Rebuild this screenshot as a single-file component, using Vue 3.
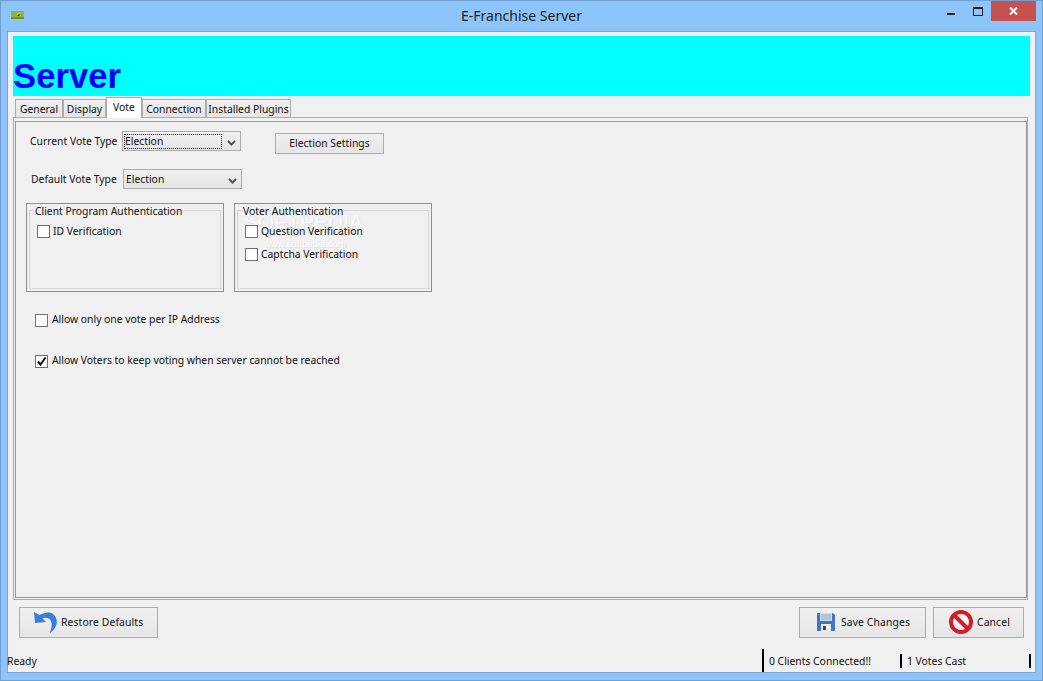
<script setup>
const tabs = [
  { label: 'General', width: 48 },
  { label: 'Display', width: 43 },
  { label: 'Vote', width: 36, active: true },
  { label: 'Connection', width: 64 },
  { label: 'Installed Plugins', width: 85 }
]
</script>

<template>
  <div class="window">
    <header class="titlebar">
      <svg class="app-icon" width="13" height="8" viewBox="0 0 13 8">
        <rect width="13" height="8" fill="#8fb83a" />
        <rect y="6" width="13" height="2" fill="#6f8f3a" />
        <path d="M5 4l3-3 1 1-2 3z" fill="#e4d020" />
        <path d="M6 5l2-2 1 1-1 1z" fill="#2c3a10" />
      </svg>
      <h1 class="title">E-Franchise Server</h1>
      <div class="controls">
        <span class="minimize"></span>
        <span class="maximize"></span>
        <span class="close">
          <svg width="9" height="8" viewBox="0 0 9 8"><path d="M1 0.5l7 7M8 0.5l-7 7" stroke="#fff" stroke-width="2" /></svg>
        </span>
      </div>
    </header>

    <main class="client">
      <div class="banner"><span class="banner-text">Server</span></div>

      <nav class="tabs">
        <div
          v-for="tab in tabs"
          :key="tab.label"
          class="tab"
          :class="{ active: tab.active }"
          :style="{ width: tab.width + 'px' }"
        >{{ tab.label }}</div>
      </nav>

      <section class="pane">
        <div class="pane-inner">
          <div class="row row-one">
            <span class="label">Current Vote Type</span>
            <div class="combo">
              <span class="combo-value focused">Election</span>
              <svg class="chev" width="9" height="6" viewBox="0 0 9 6"><path d="M1 1l3.500 3.500L8 1" fill="none" stroke="#555" stroke-width="2" /></svg>
            </div>
            <button class="btn settings">Election Settings</button>
          </div>

          <div class="row row-two">
            <span class="label">Default Vote Type</span>
            <div class="combo">
              <span class="combo-value">Election</span>
              <svg class="chev" width="9" height="6" viewBox="0 0 9 6"><path d="M1 1l3.500 3.500L8 1" fill="none" stroke="#555" stroke-width="2" /></svg>
            </div>
          </div>

          <div class="groups">
            <fieldset class="group">
              <div class="group-inner">
                <span class="legend">Client Program Authentication</span>
                <label class="check"><span class="box"></span>ID Verification</label>
              </div>
            </fieldset>
            <fieldset class="group">
              <div class="group-inner">
                <span class="wm wm-main">SOFTPEDIA</span>
                <span class="wm wm-url">www.softpedia.com</span>
                <span class="legend">Voter Authentication</span>
                <label class="check"><span class="box"></span>Question Verification</label>
                <label class="check second"><span class="box"></span>Captcha Verification</label>
              </div>
            </fieldset>
          </div>

          <label class="check solo first"><span class="box"></span>Allow only one vote per IP Address</label>
          <label class="check solo next">
            <span class="box">
              <svg width="11" height="11" viewBox="0 0 11 11"><path d="M2 5.500l2.500 3L9.500 1.500" fill="none" stroke="#111" stroke-width="2" /></svg>
            </span>Allow Voters to keep voting when server cannot be reached
          </label>
        </div>
      </section>

      <div class="actions">
        <button class="btn action restore">
          <svg width="24" height="24" viewBox="0 0 24 24">
            <path d="M0 2l1 11 11-1-3.500-3.500c3-1.500 7-.5 8.500 2.500 1.500 3.500.5 8-1.500 12.500 5-3.500 8.500-9 7-14C21 2.500 14 0 5.500 5z" fill="#3b7ddd" />
          </svg>
          <span>Restore Defaults</span>
        </button>
        <div class="spacer"></div>
        <button class="btn action save">
          <svg width="18" height="18" viewBox="0 0 18 18">
            <path d="M0 0h16l2 2v16H0z" fill="#3f78bd" />
            <rect x="3" y="0" width="12" height="8" fill="#c9d7e8" />
            <path d="M4 2h10M4 4h10M4 6h10" stroke="#9db4d0" stroke-width="1" />
            <rect x="4" y="11" width="10" height="7" fill="#f0f0f0" />
            <rect x="6" y="13" width="3" height="4" fill="#2a4c80" />
          </svg>
          <span>Save Changes</span>
        </button>
        <button class="btn action cancel">
          <svg width="24" height="24" viewBox="0 0 24 24">
            <circle cx="12" cy="12" r="10" fill="#f4f4f4" stroke="#d01f2a" stroke-width="4" />
            <path d="M5.500 5.500l13 13" stroke="#d01f2a" stroke-width="4" />
          </svg>
          <span>Cancel</span>
        </button>
      </div>

      <footer class="status">
        <span class="ready">Ready</span>
        <span class="cell clients">0 Clients Connected!!</span>
        <span class="cell votes">1 Votes Cast</span>
      </footer>
    </main>
  </div>
</template>

<style>
html, body { margin: 0; background: #8dc5fa; }
</style>

<style scoped>
.window {
  width: 1043px;
  height: 681px;
  box-sizing: border-box;
  border: 1px solid #6f9fd0;
  background: #8dc5fa;
  padding: 0 6px 7px;
  display: flex;
  flex-direction: column;
  font-family: "Noto Sans", "Open Sans", sans-serif;
  font-size: 10.35px;
  color: #111;
  overflow: hidden;
}
.titlebar {
  height: 30px;
  flex: none;
  position: relative;
  display: flex;
  align-items: flex-start;
  justify-content: center;
}
.app-icon { position: absolute; left: 4px; top: 10px; }
.title {
  margin: 7px 0 0;
  font: 400 14px/16px "Noto Sans", sans-serif;
  color: #1c1c1c;
}
.controls {
  position: absolute;
  right: 0;
  top: 0;
  display: flex;
  align-items: flex-start;
}
.minimize { width: 8px; height: 2px; background: #222; margin: 12px 18px 0 0; }
.maximize { width: 10px; height: 9px; box-sizing: border-box; border: 1px solid #222; border-top-width: 2px; margin: 6px 8px 0 0; }
.close {
  width: 45px;
  height: 20px;
  background: #c75050;
  display: flex;
  align-items: center;
  justify-content: center;
}
.client {
  flex: 1;
  background: #f0f0f0;
  border: 1px solid #7aa5d4;
  padding: 4px 5px 0;
  display: flex;
  flex-direction: column;
  min-height: 0;
}
.banner {
  height: 60px;
  flex: none;
  background: #00ffff;
  display: flex;
  align-items: flex-end;
}
.banner-text {
  font: 700 34.7px/36px "Liberation Sans", Arial, sans-serif;
  color: #0000ff;
  padding-bottom: 2px;
}
.tabs {
  display: flex;
  height: 21px;
  box-sizing: border-box;
  flex: none;
  padding: 0 0 0 2px;
  align-items: flex-end;
  position: relative;
  z-index: 1;
}
.tab {
  height: 18px;
  box-sizing: border-box;
  border: 1px solid #acacac;
  border-bottom: none;
  background: linear-gradient(#f0f0f0, #e5e5e5);
  text-align: center;
  line-height: 18px;
  white-space: nowrap;
}
.tab.active {
  height: 21px;
  background: #fff;
  line-height: 18px;
  margin-bottom: -1px;
}
.pane {
  height: 483px;
  flex: none;
  box-sizing: border-box;
  margin: 0 2px 0 0;
  border: 1px solid #acacac;
  padding: 3px 0 1px 1px;
  background: #f0f0f0;
}
.pane-inner {
  height: 100%;
  box-sizing: border-box;
  border: 1px solid #9a9a9a;
  padding: 9px 0 0 10px;
}
.row { display: flex; align-items: flex-start; }
.label { line-height: 20px; margin-right: 4px; white-space: nowrap; }
.row-one .label { width: 88px; margin-left: 4px; }
.row-two { margin-top: 15px; }
.row-two .label { width: 88px; margin-left: 5px; }
.combo {
  width: 119px;
  height: 20px;
  box-sizing: border-box;
  border: 1px solid #acacac;
  background: linear-gradient(#f0f0f0, #e5e5e5);
  display: flex;
  align-items: center;
  position: relative;
  padding-left: 2px;
}
.combo-value { width: 96px; height: 13px; line-height: 12px; box-sizing: border-box; }
.combo-value.focused { outline: 1px dotted #222; }
.chev { position: absolute; right: 4px; top: 8px; }
.btn {
  box-sizing: border-box;
  border: 1px solid #acacac;
  background: linear-gradient(#f0f0f0, #e5e5e5);
  font: inherit;
  color: inherit;
  padding: 0;
}
.settings { width: 109px; height: 21px; margin: 2px 0 0 34px; padding-bottom: 2px; }
.groups { display: flex; gap: 10px; margin: 14px 0 0 0; }
.group {
  width: 198px;
  height: 89px;
  box-sizing: border-box;
  margin: 0;
  border: 1px solid #8e8e8e;
  padding: 2px 2px 0 2px;
  min-width: 0;
}
.group-inner {
  box-sizing: border-box;
  border: 1px solid #d6d6d6;
  margin-top: 4px;
  height: 79px;
  padding: 13px 0 0 7px;
  position: relative;
}
.legend {
  position: absolute;
  left: 4px;
  top: -6px;
  line-height: 13px;
  background: #f0f0f0;
  padding: 0 1px;
  white-space: nowrap;
}
.wm {
  position: absolute;
  color: #f8f8f8;
  text-shadow: 1px 1px 0 #e2e2e2;
  white-space: nowrap;
  font-family: "Liberation Sans", sans-serif;
}
.wm-main { left: 6px; top: -2px; font-size: 21px; line-height: 26px; }
.wm-url { left: 26px; top: 27px; font-size: 9.500px; line-height: 12px; }
.check {
  display: flex;
  align-items: center;
  height: 14px;
  white-space: nowrap;
  position: relative;
}
.check.second { margin-top: 9px; }
.box {
  width: 13px;
  height: 13px;
  box-sizing: border-box;
  border: 1px solid #707070;
  background: #fff;
  margin-right: 3px;
  flex: none;
  display: flex;
  align-items: center;
  justify-content: center;
}
.solo { margin-left: 9px; }
.solo .box { margin: 2px 4px 0 0; }
.solo.first { margin-top: 20px; }
.solo.next { margin-top: 27px; }
.actions {
  display: flex;
  flex: none;
  margin-top: 7px;
  padding: 0 6px;
  gap: 7px;
}
.action {
  height: 31px;
  display: flex;
  align-items: center;
  justify-content: flex-start;
}
.action > * { margin-bottom: 2px; }
.action span { letter-spacing: .12px; }
.restore { width: 139px; gap: 3px; padding-left: 14px; }
.save { width: 127px; gap: 6px; padding-left: 17px; }
.cancel { width: 91px; gap: 4px; padding-left: 15px; }
.spacer { flex: 1; }
.status {
  flex: 1;
  margin: 11px -5px 0;
  display: flex;
  align-items: flex-start;
}
.ready { flex: 0 0 755px; margin-left: -1px; line-height: 24px; }
.cell {
  box-sizing: border-box;
  border-left: 2px solid #000;
  padding-left: 5px;
}
.clients { width: 138px; height: 23px; line-height: 24px; }
.votes { width: 131px; height: 14px; margin-top: 5px; line-height: 14px; border-right: 2px solid #000; }
</style>
